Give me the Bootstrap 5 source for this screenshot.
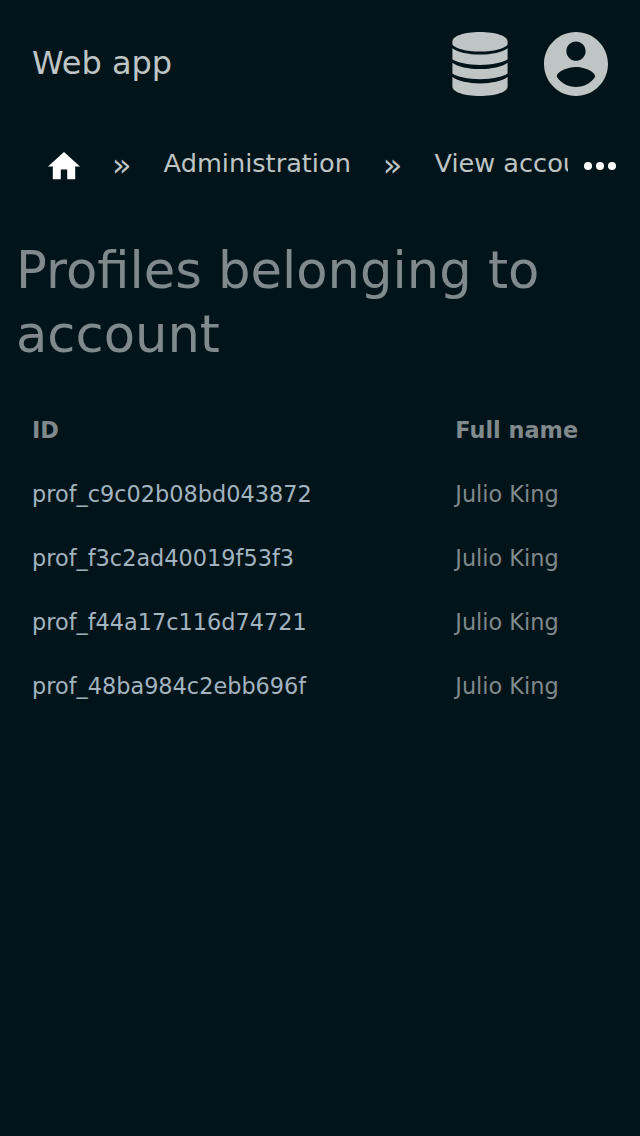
<!DOCTYPE html>
<html lang="en" data-bs-theme="dark">
<head>
<meta charset="utf-8">
<meta name="viewport" content="width=device-width, initial-scale=1">
<title>Profiles belonging to account</title>
<link href="https://cdn.jsdelivr.net/npm/bootstrap@5.3.0/dist/css/bootstrap.min.css" rel="stylesheet">
<style>
body{background:#001419;color:#80898c;font-family:"DejaVu Sans",sans-serif;font-size:22.4px}
a{color:inherit;text-decoration:none}
svg{display:block;fill:currentColor}
.app-bar{height:128px;padding:0 32px;color:#bfc4c5}
.app-title{font-size:32px;line-height:48px;padding-bottom:2px}
.app-actions{gap:36px}
.crumb-bar{height:76px;color:#bfc4c5}
.crumb-list{width:568px;padding-left:48px;gap:32px;font-size:25.6px;line-height:38px}
.crumb-sep{font-size:32px;line-height:38px;padding-bottom:2px}
.crumb-text{padding-bottom:6px}
.crumb-icon{color:#fff}
.page-title{font-size:51.2px;line-height:64px;font-weight:400;margin:34px 16px 32px;color:inherit}
.profile-table{width:608px;margin:0 16px;table-layout:fixed}
.profile-table th,.profile-table td{height:64px;padding:0 16px;line-height:32px;vertical-align:middle;text-align:left}
.profile-table th:last-child,.profile-table td:last-child{padding-left:15.3px}
.profile-table .id-col{width:424px}
.profile-table a{color:#a3b3c0}
</style>
</head>
<body>
<header class="app-bar d-flex align-items-center justify-content-between">
  <a href="#" class="app-title">Web app</a>
  <nav class="app-actions d-flex align-items-center">
    <a href="#" aria-label="Database"><svg width="56" height="64" viewBox="0 0 56 64"><path d="M.4 9.500C.4 4 12.500 0 28 0s27.600 4 27.600 9.500v3C53 16.500 42 19.600 28 19.600S3 16.500 .4 12.500z"/><path d="M.4 16.300C6 20.300 16 22.600 28 22.600s22-2.300 27.600-6.300v11C51 30.600 40 33 28 33S5 30.600 .4 27.300z"/><path d="M.4 30.800C6 34.800 16 37.100 28 37.100s22-2.300 27.600-6.300v10.800c-4.600 3.300-15.600 5.700-27.600 5.700S5 44.900 .4 41.600z"/><path d="M.4 45.100C6 49.100 16 51.400 28 51.400s22-2.300 27.600-6.300V54.500C55.600 60 43.500 64 28 64S.4 60 .4 54.500z"/></svg></a>
    <a href="#" aria-label="Profile"><svg width="64" height="64" viewBox="2 2 20 20"><path d="M12 2C6.480 2 2 6.480 2 12s4.480 10 10 10 10-4.480 10-10S17.520 2 12 2zm0 3c1.660 0 3 1.340 3 3s-1.340 3-3 3-3-1.340-3-3 1.340-3 3-3zm0 14.200c-2.500 0-4.710-1.280-6-3.220.03-1.990 4-3.080 6-3.080 1.990 0 5.970 1.090 6 3.080-1.290 1.940-3.500 3.220-6 3.220z"/></svg></a>
  </nav>
</header>
<nav class="crumb-bar d-flex align-items-center" aria-label="Breadcrumb">
  <div class="crumb-list d-flex align-items-center flex-nowrap text-nowrap overflow-hidden">
    <a href="#" class="crumb-icon flex-shrink-0" aria-label="Home"><svg width="32" height="28" viewBox="2 3 20 17.500"><path d="M10 20v-6h4v6h5v-8h3L12 3 2 12h3v8z"/></svg></a>
    <span class="crumb-sep">»</span>
    <a href="#" class="crumb-text">Administration</a>
    <span class="crumb-sep">»</span>
    <a href="#" class="crumb-text">View account</a>
  </div>
  <a href="#" class="crumb-icon ms-3" aria-label="More"><svg width="32" height="8" viewBox="0 0 32 8"><circle cx="4" cy="4" r="4"/><circle cx="16" cy="4" r="4"/><circle cx="28" cy="4" r="4"/></svg></a>
</nav>
<main>
  <h1 class="page-title">Profiles belonging to account</h1>
  <table class="profile-table">
    <thead><tr><th class="id-col">ID</th><th>Full name</th></tr></thead>
    <tbody>
      <tr><td><a href="#">prof_c9c02b08bd043872</a></td><td>Julio King</td></tr>
      <tr><td><a href="#">prof_f3c2ad40019f53f3</a></td><td>Julio King</td></tr>
      <tr><td><a href="#">prof_f44a17c116d74721</a></td><td>Julio King</td></tr>
      <tr><td><a href="#">prof_48ba984c2ebb696f</a></td><td>Julio King</td></tr>
    </tbody>
  </table>
</main>
<script src="https://cdn.jsdelivr.net/npm/bootstrap@5.3.0/dist/js/bootstrap.bundle.min.js"></script>
</body>
</html>
